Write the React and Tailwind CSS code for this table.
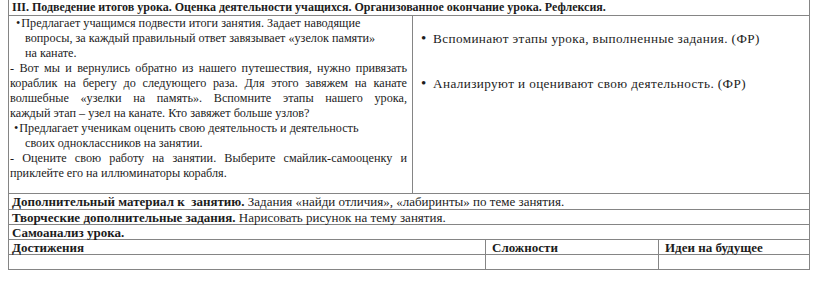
import React from 'react';

const J = ({ children, last }) => (
  <div className={last ? 'text-left' : 'text-justify [text-align-last:justify]'}>{children}</div>
);

const App = () => {
  return (
    <div className="w-[816px] h-[283px] bg-white text-[#1c1c1c] font-['Liberation_Serif',serif] text-[13px] leading-[15px]">
      <div className="ml-[8px] w-[802px] border-x border-[#858585]">
        <div className="h-[16px] border-b border-[#858585] pl-[3px] font-bold text-[12px] leading-[15px]">
          III. Подведение итогов урока. Оценка деятельности учащихся. Организованное окончание урока. Рефлексия.
        </div>

        <div className="flex h-[178px] border-b border-[#858585]">
          <div className="w-[404px] border-r border-[#858585] pl-[1px] pr-[5px] text-[12.2px]">
            <div className="pl-[6px]">
              <span className="mr-[1px]">•</span>Предлагает учащимся подвести итоги занятия. Задает наводящие
            </div>
            <div className="pl-[15px]">вопросы, за каждый правильный ответ завязывает «узелок памяти»</div>
            <div className="pl-[15px]">на канате.</div>
            <J>- Вот мы и вернулись обратно из нашего путешествия, нужно привязать</J>
            <J>кораблик на берегу до следующего раза. Для этого завяжем на канате</J>
            <J>волшебные «узелки на память». Вспомните этапы нашего урока,</J>
            <J last>каждый этап – узел на канате. Кто завяжет больше узлов?</J>
            <div className="pl-[4px]">
              <span className="mr-[1px]">•</span>Предлагает ученикам оценить свою деятельность и деятельность
            </div>
            <div className="pl-[15px]">своих одноклассников на занятии.</div>
            <J>- Оцените свою работу на занятии. Выберите смайлик-самооценку и</J>
            <J last>приклейте его на иллюминаторы корабля.</J>
          </div>
          <div className="flex-1 pt-[15px] pl-[8px] flex flex-col gap-[30px] text-[13.2px] tracking-[0.4px]">
            <div className="flex">
              <span className="w-[12px] text-[15px]">•</span>
              <span>Вспоминают этапы урока, выполненные задания. (ФР)</span>
            </div>
            <div className="flex">
              <span className="w-[12px] text-[15px]">•</span>
              <span>Анализируют и оценивают свою деятельность. (ФР)</span>
            </div>
          </div>
        </div>

        <div className="h-[16px] border-b border-[#858585] pl-[3px]">
          <span className="font-bold">Дополнительный материал к&nbsp; занятию.</span> Задания «найди отличия», «лабиринты» по теме занятия.
        </div>
        <div className="h-[15px] border-b border-[#858585] pl-[3px]">
          <span className="font-bold">Творческие дополнительные задания.</span> Нарисовать рисунок на тему занятия.
        </div>
        <div className="h-[15px] border-b border-[#858585] pl-[3px] font-bold">Самоанализ урока.</div>
        <div className="flex h-[15px] border-b border-[#858585] font-bold">
          <div className="w-[477px] border-r border-[#858585] pl-[3px]">Достижения</div>
          <div className="w-[173px] border-r border-[#858585] pl-[6px]">Сложности</div>
          <div className="flex-1 pl-[6px]">Идеи на будущее</div>
        </div>
        <div className="flex h-[15px] border-b border-[#858585]">
          <div className="w-[477px] border-r border-[#858585]"></div>
          <div className="w-[173px] border-r border-[#858585]"></div>
          <div className="flex-1"></div>
        </div>
      </div>
    </div>
  );
};

export default App;
